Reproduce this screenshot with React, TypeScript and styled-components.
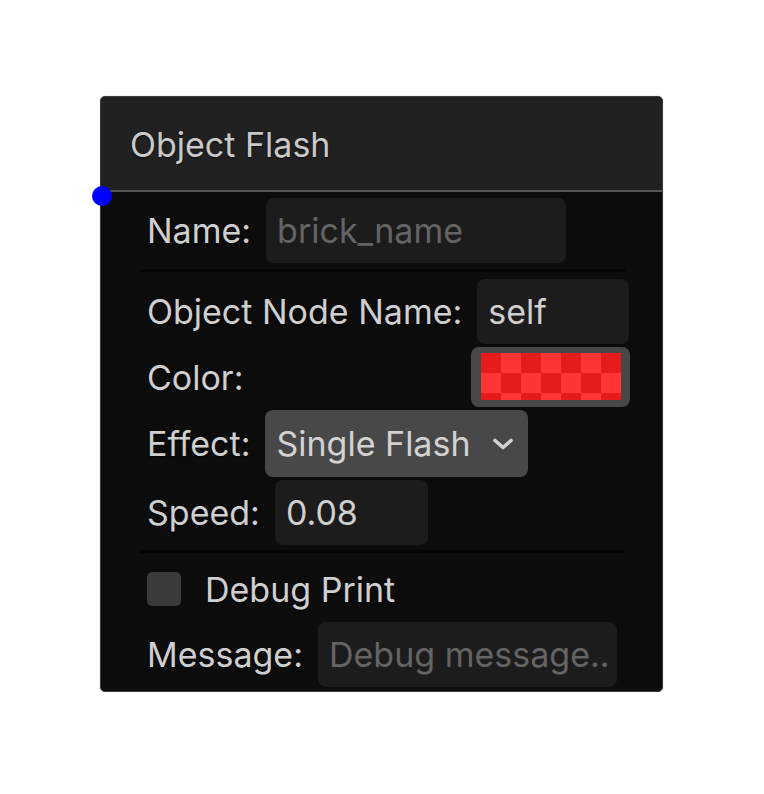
import React from 'react'
import styled, { createGlobalStyle } from 'styled-components'

const GlobalStyle = createGlobalStyle`
    body {
        margin: 0;
        background: #ffffff;
        font-family: Inter, "Noto Sans", sans-serif;
    }
`

const Page = styled.div`
    padding: 96px 0 0 100px;
`

const Node = styled.div`
    position: relative;
    width: 561px;
    border: 1px solid #3c3c3c;
    border-radius: 5px;
    background: #0c0c0c;
    box-shadow: 0 0 1px rgba(0, 0, 0, 0.4);
`

const TitleBar = styled.div`
    height: 95px;
    box-sizing: border-box;
    display: flex;
    align-items: center;
    padding: 2px 0 0 29px;
    background: #212121;
    border-bottom: 2px solid #575757;
    border-radius: 4px 4px 0 0;
    font-size: 34px;
    color: #c9c9c9;
    text-shadow: 0 1px 2px rgba(0, 0, 0, 0.7);
`

/* input port on the left edge */
const Port = styled.div`
    position: absolute;
    left: -9px;
    top: 89px;
    width: 20px;
    height: 20px;
    border-radius: 50%;
    background: #0000ff;
`

const Body = styled.div`
    display: flex;
    flex-direction: column;
    padding: 6px 33px 4px 39px;
`

const Row = styled.div<{ $gap?: number; $height?: number; $mt?: number }>`
    display: flex;
    align-items: center;
    gap: ${(p) => p.$gap ?? 15}px;
    padding-left: 7px;
    min-height: ${(p) => p.$height ?? 0}px;
    margin-top: ${(p) => p.$mt ?? 0}px;
`

const Label = styled.span`
    font-size: 34px;
    color: #cfcfcf;
    text-shadow: 0 1px 2px rgba(0, 0, 0, 0.7);
    white-space: nowrap;
`

const TextField = styled.div<{ $width: number; $placeholder?: boolean }>`
    width: ${(p) => p.$width}px;
    height: 65px;
    box-sizing: border-box;
    display: flex;
    align-items: center;
    padding-left: 11px;
    overflow: hidden;
    white-space: nowrap;
    background: #1c1c1c;
    border-radius: 8px;
    font-size: 34px;
    color: ${(p) => (p.$placeholder ? '#646464' : '#cfcfcf')};
`

const Separator = styled.div<{ $top: number; $bottom: number }>`
    height: 3px;
    margin: ${(p) => p.$top}px 4px ${(p) => p.$bottom}px 0;
    background: #040404;
`

const ColorButton = styled.div`
    margin-left: auto;
    margin-right: -1px;
    width: 159px;
    height: 60px;
    box-sizing: border-box;
    padding: 6px 9px 7px 10px;
    background: #474747;
    border-radius: 8px;
`

const Swatch = styled.div`
    width: 100%;
    height: 100%;
    background-color: #ff3535;
    background-image: conic-gradient(
        transparent 0 25%,
        #e61b1b 0 50%,
        transparent 0 75%,
        #e61b1b 0
    );
    background-size: 40px 40px;
`

const Dropdown = styled.div`
    width: 263px;
    height: 67px;
    box-sizing: border-box;
    display: flex;
    align-items: center;
    justify-content: space-between;
    padding: 0 14px 0 11px;
    background: #484848;
    border-radius: 8px;
    font-size: 34px;
    color: #d2d2d2;
`

const Checkbox = styled.div`
    width: 34px;
    height: 34px;
    border-radius: 5px;
    background: #3a3a3a;
`

const Chevron = () => (
    <svg width="22" height="14" viewBox="0 0 22 14" fill="none">
        <path d="M3 3.5l8 7 8-7" stroke="#d2d2d2" strokeWidth="3.6" strokeLinecap="round" strokeLinejoin="round" />
    </svg>
)

export default function App() {
    return (
        <>
            <GlobalStyle />
            <Page>
                <Node>
                    <TitleBar>Object Flash</TitleBar>
                    <Port />
                    <Body>
                        <Row>
                            <Label>Name:</Label>
                            <TextField $width={300} $placeholder>brick_name</TextField>
                        </Row>
                        <Separator $top={6} $bottom={7} />
                        <Row>
                            <Label>Object Node Name:</Label>
                            <TextField $width={153}>self</TextField>
                        </Row>
                        <Row $mt={3}>
                            <Label>Color:</Label>
                            <ColorButton>
                                <Swatch />
                            </ColorButton>
                        </Row>
                        <Row $mt={3}>
                            <Label>Effect:</Label>
                            <Dropdown>
                                Single Flash
                                <Chevron />
                            </Dropdown>
                        </Row>
                        <Row $mt={3}>
                            <Label>Speed:</Label>
                            <TextField $width={153}>0.08</TextField>
                        </Row>
                        <Separator $top={5} $bottom={5} />
                        <Row $gap={24} $height={62}>
                            <Checkbox />
                            <Label>Debug Print</Label>
                        </Row>
                        <Row $mt={2}>
                            <Label>Message:</Label>
                            <TextField $width={299} $placeholder>Debug message..</TextField>
                        </Row>
                    </Body>
                </Node>
            </Page>
        </>
    )
}
